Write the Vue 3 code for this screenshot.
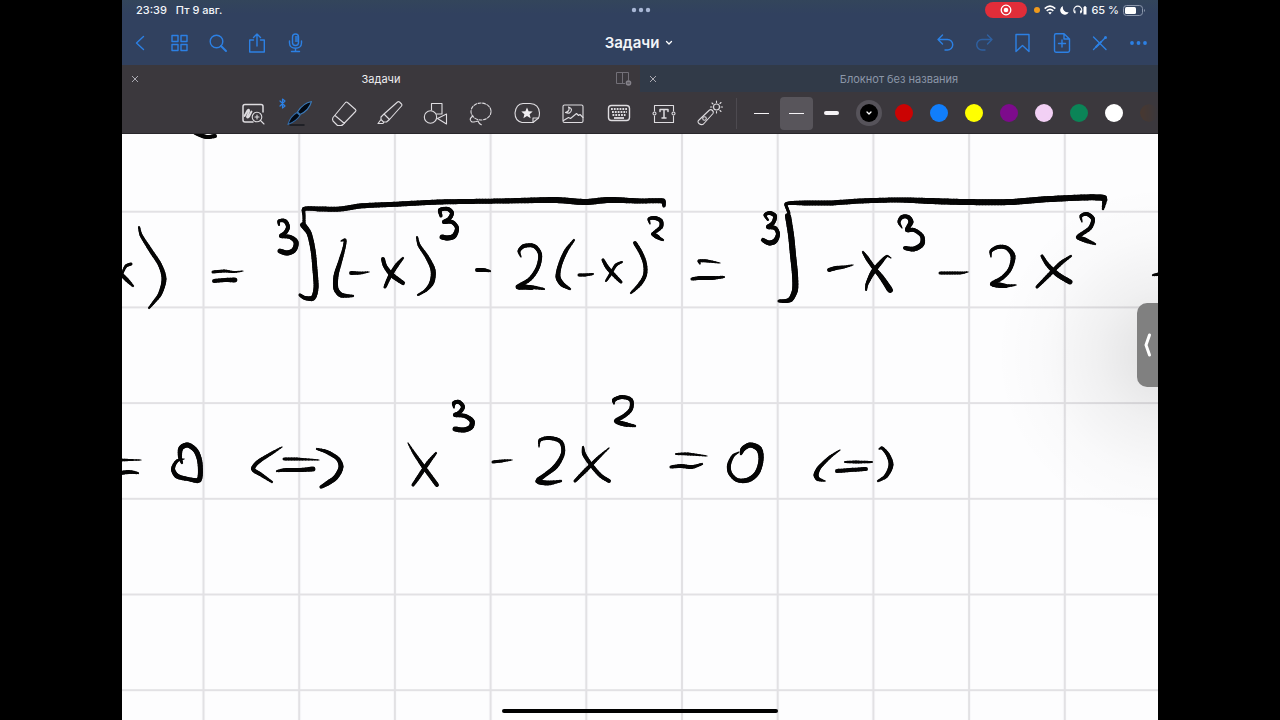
<script setup>
import { ref } from 'vue'

// Each pen stroke is a list of "x,y,width" points; the nib width varies along the stroke.
const strokes = [
  // first line
  '193,132,3 200,135,4 207,137,4 215,136,4',
  '121,274,4 127,280,4 133,286,2', '131,264,3 126,266,3 122,274,2',
  '139,227,2 141,235,3 151,251,4 160,265,4 164,279,5 160,294,4 154,302,3 149,308,2',
  '213,272,3 224,271,3 234,272,2 243,271,1',
  '214,281,4 225,280,4 235,280,5',
  '279,225,2 279,221,3 285,221,4 288,227,4 285,233,4 281,236,4 290,237,4 296,242,5 294,250,5 287,253,5 280,251,5',
  '303,225,6 309,233,5 313,250,5 315,270,5 316,288,5 313,298,5 305,298,4 300,295,3',
  '304,224,3 304,216,3 304,209,4 320,209,5 340,209,5 360,206,5 400,204,5 440,202,5 500,201,5 555,200,6 570,201,6 585,202,6 610,200,6 640,201,5 663,201,5 664,206,3',
  '341,241,1 345,240,3 344,248,3 340,262,4 336,276,5 336,289,5 341,295,5 353,296,2',
  '351,273,4 360,273,3 369,272,1',
  '383,259,4 385,266,4 392,275,5 403,283,4', '403,258,2 397,265,4 390,276,4 385,287,3',
  '417,237,2 419,245,3 427,257,4 433,270,5 432,282,5 426,290,3 418,295,2',
  '441,216,3 440,210,4 448,209,4 452,213,4 449,219,4 444,222,4 452,222,4 457,228,4 454,236,5 448,238,5 442,237,5',
  '477,270,4 483,270,4 490,271,2',
  '521,257,1 519,251,3 524,246,4 534,246,4 540,254,4 538,267,4 530,279,4 518,287,4 530,287,4 544,289,2',
  '518,287,5 525,287,5 532,288,4',
  '574,240,2 566,251,4 560,265,4 558,277,5 562,284,5 570,289,2',
  '579,275,3 585,275,3 593,274,2',
  '603,260,3 607,267,4 614,275,4 621,282,3', '622,262,2 616,265,3 610,275,3 606,281,2',
  '635,243,4 641,253,4 645,264,4 645,275,4 640,284,4 631,293,2',
  '650,224,1 649,219,3 655,218,4 661,221,4 661,227,4 653,234,3 657,237,4 663,240,2',
  '653,234,4 658,237,4',
  '700,264,1 699,261,3 707,261,3 720,263,1',
  '692,279,3 700,278,4 712,278,4 724,277,2',
  '768,220,2 765,215,3 770,213,4 775,216,4 773,223,4 768,227,4 775,228,4 778,234,4 775,241,5 769,243,5 763,240,4',
  '788,216,6 791,235,6 793,255,6 795,275,6 795,290,6 791,299,5 786,301,4 779,301,3',
  '789,213,3 787,208,3 786,204,3 792,203,4 805,203,5 830,203,5 860,201,5 900,200,5 930,201,6 965,202,6 1010,202,6 1050,199,6 1104,198,6 1103,209,2',
  '829,270,4 836,268,4 844,267,3 853,265,1',
  '863,252,2 867,258,4 874,268,4 882,278,5 890,290,6', '891,258,1 887,256,2 881,262,4 873,272,5 867,284,3 866,290,2',
  '902,228,1 899,222,3 902,217,4 908,217,4 911,222,5 907,230,4 914,230,4 922,236,4 922,244,5 914,249,5 905,248,4',
  '940,273,3 950,273,3 960,273,3 968,272,1',
  '991,257,1 991,251,3 998,247,4 1007,248,4 1013,256,5 1010,269,4 1002,278,4 992,284,4 1003,286,4 1016,285,1',
  '992,284,4 999,285,5 1006,286,4',
  '1042,256,3 1047,264,4 1057,274,5 1070,282,5', '1071,256,2 1061,263,4 1049,275,4 1037,287,3',
  '1082,222,1 1081,216,3 1087,214,4 1093,219,4 1090,228,4 1078,237,4 1085,240,5 1095,244,2',
  '1153,275,2 1160,274,4',
  // second line
  '120,460,3 130,460,2 141,460,1', '120,473,4 129,472,4 138,473,2',
  '182,463,2 180,457,4 181,448,5 188,445,5 196,451,5 200,463,5 199,480,5 188,479,4 177,476,5 173,469,4 177,461,3 184,459,1',
  '282,447,1 272,453,3 258,462,4 253,469,4 260,474,4 272,482,2',
  '284,459,3 297,459,3 319,460,1', '277,471,2 286,470,4 300,470,4 313,469,5',
  '317,449,2 327,452,4 338,459,4 341,467,5 336,477,5 328,483,5 321,487,3',
  '408,443,1 414,453,3 423,466,4 437,485,4', '436,453,2 428,463,4 420,475,4 413,485,3',
  '454,408,1 454,403,4 459,402,4 463,407,4 459,413,4 455,415,4 465,416,4 472,421,5 471,427,5 464,430,5 455,429,5',
  '493,462,3 502,461,3 512,460,1',
  '539,447,1 540,440,3 550,438,4 561,442,4 563,453,4 556,466,5 545,475,4 538,481,5 548,483,5 561,481,2',
  '583,447,2 584,454,4 592,466,4 601,476,4 609,481,4', '609,448,1 599,457,3 586,470,4 575,481,3',
  '614,404,1 614,400,4 622,397,4 631,400,4 631,409,4 624,416,4 616,421,4 624,424,5 635,426,2',
  '676,454,2 688,454,3 707,456,1', '671,467,3 681,466,4 692,467,4 702,464,2',
  '741,454,2 743,449,5 750,445,5 759,449,6 761,460,5 757,473,5 748,480,5 737,480,4 730,473,4 729,465,4 733,456,3 739,452,1',
  '840,450,1 830,457,3 819,468,4 816,475,5 818,479,4 825,481,1',
  '845,462,2 856,462,3 872,462,2', '837,471,4 850,470,4 866,469,4',
  '879,449,1 882,448,3 888,455,4 891,465,5 886,476,4 878,481,2'
]

function expand(text) {
  const p = text.split(' ').map((s) => s.split(',').map(Number))
  const out = []
  let last = p[0]
  for (let i = 0; i < p.length - 1; i++) {
    const [a, b, c, d] = [p[i - 1] || p[i], p[i], p[i + 1], p[i + 2] || p[i + 1]]
    const span = Math.hypot(c[0] - b[0], c[1] - b[1])
    const n = Math.max(4, Math.ceil(span / 3))
    const before = Math.min(1, span / (Math.hypot(b[0] - a[0], b[1] - a[1]) || 1))
    const after = Math.min(1, span / (Math.hypot(d[0] - c[0], d[1] - c[1]) || 1))
    for (let k = 1; k <= n; k++) {
      const t = k / n
      const at = (j) => {
        const m1 = ((c[j] - a[j]) / 2) * before
        const m2 = ((d[j] - b[j]) / 2) * after
        return (2 * t ** 3 - 3 * t ** 2 + 1) * b[j] + (t ** 3 - 2 * t ** 2 + t) * m1 + (3 * t ** 2 - 2 * t ** 3) * c[j] + (t ** 3 - t ** 2) * m2
      }
      const next = [at(0), at(1), b[2] + (c[2] - b[2]) * t]
      out.push({ d: `M${last[0]} ${last[1]}L${next[0]} ${next[1]}`, w: (last[2] + next[2]) / 2 })
      last = next
    }
  }
  return out
}
const ink = strokes.flatMap(expand)

const tool = ref('Ручка')
const tools = ['Увеличение', 'Ручка', 'Ластик', 'Маркер', 'Фигуры', 'Лассо', 'Элементы', 'Изображение', 'Клавиатура', 'Текст', 'Указка']
const widths = [{ name: 'Тонкая', cls: 'thin' }, { name: 'Средняя', cls: 'medium' }, { name: 'Толстая', cls: 'thick' }]
const activeWidth = ref('Средняя')
const colors = [
  { name: 'Чёрный', value: '#000000' }, { name: 'Красный', value: '#cb0303' },
  { name: 'Синий', value: '#117efb' }, { name: 'Жёлтый', value: '#ffff00' },
  { name: 'Фиолетовый', value: '#7d0b8c' }, { name: 'Розовый', value: '#f2d0f5' },
  { name: 'Зелёный', value: '#0b8457' }, { name: 'Белый', value: '#ffffff' },
  { name: 'Коричневый', value: '#5d3a1d' }
]
const activeColor = ref('Чёрный')
</script>

<template>
  <div class="screen">
    <header class="top">
      <div class="status">
        <div class="when"><span>23:39</span><span>Пт 9 авг.</span></div>
        <button class="plain" aria-label="Многозадачность">
          <svg width="20" height="6" viewBox="0 0 20 6" fill="#a9b8d6"><circle cx="3" cy="3" r="2.200" /><circle cx="10" cy="3" r="2.200" /><circle cx="17" cy="3" r="2.200" /></svg>
        </button>
        <div class="indicators">
          <span class="rec">
            <svg width="12" height="12" viewBox="0 0 12 12"><circle cx="6" cy="6" r="4.800" fill="none" stroke="#fff" stroke-width="1.300" /><circle cx="6" cy="6" r="2.300" fill="#fff" /></svg>
          </span>
          <span class="mic-dot"></span>
          <svg width="12" height="10" viewBox="0 0 12 10" fill="none" stroke="#fff" stroke-width="1.600"><path d="M.7 3.600Q6-1.200 11.300 3.600M2.700 5.900Q6 3 9.300 5.900" /><path d="M4.200 7.600Q6 6.200 7.800 7.600L6 9.600z" fill="#fff" stroke="none" /></svg>
          <svg width="9" height="10" viewBox="0 0 9 10"><path d="M3 1A4.500 4.500 0 1 0 8.700 7.200A5 5 0 0 1 3 1z" fill="#fff" /></svg>
          <svg width="14" height="10" viewBox="0 0 14 10"><path d="M2 8A4 4 0 1 1 7.600 8" fill="none" stroke="#fff" stroke-width="1.100" /><path d="M1 5.500h1.500v3.500zM8.500 5.500H7V9zM10.500 2h.8V1h1.400v1h.8v7.500h-3z" fill="#fff" /></svg>
          <span>65 %</span>
          <svg width="23" height="11" viewBox="0 0 23 11"><rect x=".5" y=".5" width="19" height="10" rx="3" fill="none" stroke="#8b97ac" /><rect x="2" y="2" width="11" height="7" rx="1.500" fill="#fff" /><path d="M21 4q2 1.500 0 3z" fill="#8b97ac" /></svg>
        </div>
      </div>

      <nav class="nav">
        <div class="group">
          <button class="plain" aria-label="Назад"><svg viewBox="0 0 20 20"><path d="M13.500 3.500L6.500 10l7 6.500" /></svg></button>
          <button class="plain" aria-label="Документы"><svg viewBox="0 0 20 20"><path d="M3 2.500h6v6H3zM12 2.500h6v6h-6zM3 11.500h6v6H3zM12 11.500h6v6h-6z" /></svg></button>
          <button class="plain" aria-label="Поиск"><svg viewBox="0 0 20 20"><circle cx="8.500" cy="8.500" r="6.300" /><path d="M13 13l5 5" stroke-width="2" /></svg></button>
          <button class="plain" aria-label="Поделиться"><svg viewBox="0 0 20 20"><path d="M6.500 7H2.700v12h14.600V7h-3.800M10 13V1M6.500 4.500L10 1l3.500 3.500" /></svg></button>
          <button class="plain" aria-label="Запись"><svg viewBox="0 0 20 20"><rect x="6.500" y="1" width="6" height="11.500" rx="3" /><path d="M3.500 8v2c0 7 12 7 12 0V8M9.500 15.500v3M5.500 18.500h8M9.500 4h2M9.500 6h2M9.500 8h2" /></svg></button>
        </div>
        <button class="title plain">Задачи
          <svg class="chev" width="8" height="6" viewBox="0 0 8 6"><path d="M1.500 1.500L4 4l2.500-2.500" /></svg>
        </button>
        <div class="group right">
          <button class="plain" aria-label="Отменить"><svg viewBox="0 0 20 20"><path d="M7.500 2L3 6.500 7.500 11M3 6.500h9.500a5 5 0 0 1 0 10.500H10" /></svg></button>
          <button class="plain dim" aria-label="Повторить"><svg viewBox="0 0 20 20"><path d="M13.500 2L18 6.500 13.500 11M18 6.500H8A5 5 0 0 0 8 17h3" /></svg></button>
          <button class="plain" aria-label="Закладка"><svg viewBox="0 0 20 20"><path d="M4 1.500h13v17L10.500 12.500 4 18.500z" /></svg></button>
          <button class="plain" aria-label="Добавить страницу"><svg viewBox="0 0 20 20"><path d="M13 .8H5Q3.500.8 3.500 2.500v15Q3.500 19.200 5 19.200h12q1.500 0 1.500-1.700V6zM13 .8V6h5.500M11 7v7M7.500 10.500h7" /></svg></button>
          <button class="plain" aria-label="Режим чтения"><svg viewBox="0 0 20 20"><path d="M4.500 4L17 16.500M4.500 16.500l5-5M12.500 8.500L16 5" /><path d="M7 14L12 9" stroke-width="2" /><circle cx="16.500" cy="4.500" r=".8" /></svg></button>
          <button class="plain" aria-label="Ещё"><svg viewBox="0 0 20 20"><g fill="#2c80e4" stroke="none"><circle cx="4" cy="10" r="1.900" /><circle cx="10.500" cy="10" r="1.900" /><circle cx="17" cy="10" r="1.900" /></g></svg></button>
        </div>
      </nav>
    </header>

    <div class="tabs">
      <div class="tab active">
        <button class="plain close" aria-label="Закрыть Задачи"><svg width="8" height="8" viewBox="0 0 8 8"><path d="M1 1l6 6M7 1L1 7" /></svg></button>
        <button class="plain name">Задачи</button>
        <button class="plain split" aria-label="Разделить окно"><svg width="18" height="16" viewBox="0 0 18 16"><path d="M11 12.500H2.500v-11h12v8M8.500 1.500v11" fill="none" stroke="#737078" /><circle cx="14.500" cy="12" r="2.800" fill="#85828a" /><path d="M13 12h3" stroke="#4b484e" /></svg></button>
      </div>
      <div class="tab">
        <button class="plain close" aria-label="Закрыть Блокнот"><svg width="8" height="8" viewBox="0 0 8 8"><path d="M1 1l6 6M7 1L1 7" /></svg></button>
        <button class="plain name">Блокнот без названия</button>
        <span></span>
      </div>
    </div>

    <div class="toolbar">
      <div class="tools">
        <button v-for="(t, i) in tools" :key="t" class="plain tool" :aria-label="t" :aria-pressed="tool === t" @click="tool = t">
          <svg width="28" height="28" viewBox="0 0 28 28">
            <g v-if="i === 0"><path d="M14 23H6q-2 0-2-2V7.500q0-2 2-2h16q2 0 2 2V13" stroke-width="1.500" /><path d="M5.500 17l3-5.500q2-2 1.500 1l-2 5q0 2 2 0l2.500-5" stroke-width="1.900" /><circle cx="18" cy="18" r="4.800" /><path d="M21.500 21.500L25 25M18 16v4M16 18h4" /></g>
            <g v-else-if="i === 1"><path d="M3 25.500q2-8 9-12l3 3q-4 6-12 9z" fill="#030a14" stroke="#336ba8" /><path d="M12.500 13Q18 4 26.500 2.500q-2.500 9-11.500 13z" fill="#030a14" stroke="#3b79b7" /><path d="M5 26h14" stroke="#17191f" stroke-width="1.500" /></g>
            <g v-else-if="i === 2"><path d="M3 18.500L15.500 3.500q1-1 2 0l8 7q1 1 0 2L13 25.500q-1 1-2 1H7.500L3 22q-1-2 0-3.500zM5 16.500l9.500 8" /></g>
            <g v-else-if="i === 3"><path d="M8 15L21.500 3q1-.8 2 0l2 2q1 1 0 2L13.500 20.500M8 15l5.500 5.500-3 2.500H7.500L5 20.500V18zM5 20.500l-3 4h5l1-1.500" /></g>
            <g v-else-if="i === 4"><circle cx="8.500" cy="18" r="6.200" /><path d="M9.500 11V4.500H20V15h-5.500M15.500 19.500l9-4.500v10z" /></g>
            <g v-else-if="i === 5"><ellipse cx="14" cy="12.500" rx="10" ry="8.500" stroke-dasharray="3 1.500" /><path d="M6 17q-5 3-1 6 3 0 6-1 M11 22q1 3 4 4" stroke-dasharray="5 1" /></g>
            <g v-else-if="i === 6"><path d="M20 23.500H9Q2 22 2 14Q3 5 10 4.500h7Q26 5 26.500 14q0 3-1 5z" /><path d="M20 23.500V19h5.500" /><path d="M14 8.500l1.600 3.800 4.100.3-3.100 2.700 1 4-3.600-2.200-3.600 2.200 1-4-3.100-2.700 4.100-.3z" fill="#f0eef1" stroke="none" /></g>
            <g v-else-if="i === 7"><rect x="4" y="6" width="20" height="17.500" rx="1.500" /><path d="M9.500 8q2 4-3 5.500 5 2 6-2.500 0-2-3-3M4.500 21.500l5-3 2 1 6-5 2 2 1.500-1 3 3" /></g>
            <g v-else-if="i === 8"><rect x="3.500" y="6.500" width="21" height="15" rx="3" stroke-width="1.400" /><g stroke-width="1.800" stroke-linecap="butt"><path d="M6 10h16M7.500 16h13" stroke-dasharray="1.800 1.050" /><path d="M7 13h15" stroke-dasharray="1.800 1.050" /><path d="M9 19h10" /></g></g>
            <g v-else-if="i === 9"><path d="M4.500 12V6.500h19V12M4.500 17v6.500h19V17" /><circle cx="4.500" cy="14.500" r="1.500" /><circle cx="23.500" cy="14.500" r="1.500" /><path d="M10 12.500v-2h8v2M14 10.500v8.500M12 19h4" stroke-width="1.500" /></g>
            <g v-else><path d="M3 21L13.500 11q1.500-1 3 .5t.5 3L7.500 25q-2 1.500-4.500-.5-2-2 0-3.500z" /><circle cx="8.500" cy="19.500" r="1.800" /><circle cx="20.500" cy="8" r="3" /><path d="M20.500 2v1.500M20.500 12.500V14M26.500 8H25M16 8h-1.500M16 4l1 1M24 11.500l1 1M25 3.500l-1 1" /></g>
          </svg>
          <svg v-if="i === 1" class="bt" width="7" height="11" viewBox="0 0 7 11"><path d="M1 3l5 5-2.500 2V1L6 3 1 8" /></svg>
        </button>
      </div>
      <span class="divider"></span>
      <button v-for="w in widths" :key="w.name" class="plain width" :class="{ on: activeWidth === w.name }" :aria-label="w.name" @click="activeWidth = w.name"><i :class="w.cls"></i></button>
      <div class="colors">
        <button v-for="c in colors" :key="c.name" class="plain color" :class="{ on: activeColor === c.name }" :aria-label="c.name" @click="activeColor = c.name">
          <i :style="{ background: c.value }"><svg v-if="activeColor === c.name" class="chev" width="8" height="6" viewBox="0 0 8 6"><path d="M2 2l2 2 2-2" /></svg></i>
        </button>
      </div>
    </div>

    <main class="page">
      <svg class="paper" viewBox="122 134 1036 586" preserveAspectRatio="xMinYMin slice" role="img" aria-label="Рукописные уравнения">
        <defs>
          <pattern id="cells" x="203.500" y="211.700" width="95.700" height="95.700" patternUnits="userSpaceOnUse">
            <path d="M0 0H95.700M0 95.700H95.700M0 0V95.700M95.700 0V95.700" stroke="#e2e1e4" stroke-width="2.200" fill="none" />
          </pattern>
          <radialGradient id="shade" gradientUnits="userSpaceOnUse" cx="1165" cy="355" r="170">
            <stop offset="0" stop-color="#000" stop-opacity=".12" />
            <stop offset=".4" stop-color="#000" stop-opacity=".05" />
            <stop offset=".7" stop-color="#000" stop-opacity=".015" />
            <stop offset="1" stop-color="#000" stop-opacity="0" />
          </radialGradient>
        </defs>
        <rect x="122" y="134" width="1036" height="586" fill="#fdfdfe" />
        <rect x="122" y="134" width="1036" height="586" fill="url(#cells)" />
        <rect x="980" y="134" width="178" height="420" fill="url(#shade)" />
        <path v-for="(s, n) in ink" :key="n" :d="s.d" :stroke-width="s.w" class="ink" />
      </svg>
      <button class="plain handle" aria-label="Показать панель"><svg width="10" height="26" viewBox="0 0 10 26"><path d="M6.500 3L3 13l3.500 10" fill="none" stroke="#fff" stroke-width="3" stroke-linecap="round" stroke-linejoin="round" /></svg></button>
      <span class="home"></span>
    </main>
  </div>
</template>

<style>
body { margin: 0; background: #000; }
</style>

<style scoped>
.screen {
  box-sizing: border-box;
  display: flex;
  flex-direction: column;
  min-height: 100vh;
  padding: 0 122px;
  background: #000;
  color: #f3f5f9;
  font-family: Inter, "Noto Sans", sans-serif;
  font-size: 11px;
}
.plain {
  display: flex;
  align-items: center;
  justify-content: center;
  padding: 0;
  border: 0;
  background: none;
  color: inherit;
  font: inherit;
}
svg { display: block; flex: none; }
.top { background: linear-gradient(#33455b, #31415f 14px, #31415f); }
.status {
  display: grid;
  grid-template-columns: 1fr auto 1fr;
  align-items: center;
  height: 20px;
  padding: 0 12px 0 14px;
  font-weight: 500;
}
.when { display: flex; gap: 9px; }
.indicators { display: flex; align-items: center; justify-content: flex-end; gap: 4px; }
.rec {
  display: flex;
  align-items: center;
  justify-content: center;
  width: 42px;
  height: 16px;
  margin-right: 3px;
  border-radius: 8px;
  background: #e12d39;
}
.mic-dot { width: 6px; height: 6px; border-radius: 50%; background: #f09a1c; }
.nav {
  display: grid;
  grid-template-columns: 1fr auto 1fr;
  align-items: center;
  height: 45px;
  padding: 0 10px 0 8px;
}
.group { display: flex; gap: 19px; }
.group .plain { width: 20px; height: 20px; }
.group svg { width: 20px; height: 20px; fill: none; stroke: #2c80e4; stroke-width: 1.4; stroke-linejoin: round; stroke-linecap: round; }
.right { justify-self: end; justify-content: space-between; gap: 0; width: 213px; }
.dim { opacity: .5; }
.title { gap: 6px; font-size: 15px; font-weight: 600; line-height: 20px; }
.chev { fill: none; stroke: #fff; stroke-width: 1.3; stroke-linecap: round; stroke-linejoin: round; }
.tabs { display: grid; grid-template-columns: 1fr 1fr; height: 27px; }
.tab {
  display: grid;
  grid-template-columns: 26px 1fr 26px;
  align-items: center;
  background: #313a48;
  color: #8c97a8;
}
.tab.active { background: #3b383d; color: #eeedf0; }
.close svg { fill: none; stroke: #aaa9b1; stroke-width: 1; }
.split { justify-content: flex-start; }
.name { height: 27px; }
.toolbar {
  display: flex;
  align-items: center;
  height: 42px;
  padding-left: 108px;
  overflow: hidden;
  background: #3b383d;
  box-shadow: inset 0 -1px #29272b;
}
.tools { display: grid; grid-template-columns: repeat(11, 1fr); flex: none; width: 503px; }
.tool { position: relative; height: 34px; }
.tool svg { fill: none; stroke: #dedce0; stroke-width: 1.1; stroke-linejoin: round; stroke-linecap: round; }
.tool .bt { position: absolute; top: 2px; left: 3px; stroke: #2c80e4; stroke-width: 1.2; }
.divider { flex: none; width: 1px; height: 31px; margin: 0 7px 0 3px; background: #4d4a50; }
.width { flex: none; width: 35px; height: 42px; }
.width i { width: 15px; height: 1px; background: #f5f3f6; }
.width.on { width: 33px; height: 33px; margin: 0 1px; border-radius: 4px; background: #58555b; }
.width i.thick { height: 4px; border-radius: 2px; }
.colors { display: flex; flex: 1; min-width: 0; margin-left: 2px; overflow: hidden; }
.color { flex: none; width: 35px; height: 35px; }
.color i { display: flex; align-items: center; justify-content: center; width: 18px; height: 18px; border-radius: 50%; }
.color.on i { box-shadow: 0 0 0 4px #56535a; }
.color:last-child i { opacity: .4; mask-image: linear-gradient(90deg, #000, transparent); }
.page { position: relative; display: flex; flex: 1; min-height: 0; background: #fdfdfe; }
.paper { flex: 1; width: 100%; min-width: 0; }
.ink { fill: none; stroke: #050505; stroke-linecap: round; stroke-linejoin: round; }
.handle {
  position: absolute;
  top: 169px;
  right: 0;
  width: 21px;
  height: 84px;
  border-radius: 10px 0 0 10px;
  background: #808080;
}
.home {
  position: absolute;
  bottom: 7px;
  left: 50%;
  width: 276px;
  height: 4px;
  border-radius: 2px;
  background: #000;
  transform: translateX(-50%);
}
</style>
